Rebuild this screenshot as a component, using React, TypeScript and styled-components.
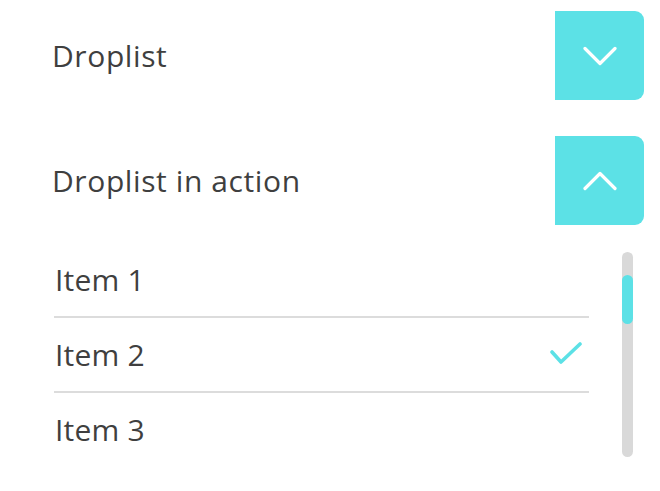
import React from "react";
import styled, { createGlobalStyle } from "styled-components";

const GlobalStyle = createGlobalStyle`
  html, body {
    margin: 0;
    padding: 0;
    background: #ffffff;
  }
  body {
    font-family: "Open Sans", "Liberation Sans", sans-serif;
    color: #3f3f3f;
  }
`;

const ACCENT = "#5ce1e6";

const Page = styled.div`
  width: 660px;
  height: 491px;
  box-sizing: border-box;
  padding: 11px 16px 0 52px;
  display: flex;
  flex-direction: column;
`;

const Header = styled.div<{ $gap?: number }>`
  display: flex;
  align-items: center;
  justify-content: space-between;
  height: 89px;
  margin-bottom: ${(p) => p.$gap ?? 0}px;
`;

const Title = styled.span`
  font-size: 30px;
  font-weight: 400;
  letter-spacing: 0.6px;
  line-height: normal;
`;

const ToggleButton = styled.button`
  width: 89px;
  height: 89px;
  border: none;
  padding: 0;
  background: ${ACCENT};
  border-radius: 0 9px 9px 0;
  display: flex;
  align-items: center;
  justify-content: center;
  cursor: pointer;
`;

const ListArea = styled.div`
  display: flex;
  align-items: flex-start;
  gap: 33px;
  margin-top: 18px;
  padding-left: 2px;
`;

const Items = styled.ul`
  list-style: none;
  margin: 0;
  padding: 0;
  width: 535px;
`;

const Item = styled.li<{ $last?: boolean }>`
  height: 73px;
  display: flex;
  align-items: center;
  justify-content: space-between;
  padding: 0 4px 0 1px;
  border-bottom: ${(p) => (p.$last ? "none" : "2px solid #dcdcdc")};
  font-size: 30px;
  letter-spacing: 0.2px;
  line-height: normal;
`;

const Track = styled.div`
  margin-top: 9px;
  width: 11px;
  height: 205px;
  border-radius: 6px;
  background: #d9d9d9;
  display: flex;
  flex-direction: column;
`;

const Thumb = styled.div`
  margin-top: 23px;
  width: 11px;
  height: 49px;
  border-radius: 6px;
  background: ${ACCENT};
`;

const Chevron = ({ up }: { up?: boolean }) => (
  <svg width="34" height="20" viewBox="0 0 34 20" fill="none">
    <polyline
      points={up ? "2,17.5 17,2.5 32,17.5" : "2,2.5 17,17.5 32,2.5"}
      stroke="#ffffff"
      strokeWidth="3.2"
      strokeLinecap="round"
      strokeLinejoin="round"
    />
  </svg>
);

const Check = () => (
  <svg width="36" height="26" viewBox="0 0 36 26" fill="none">
    <polyline
      points="3,10 12,20 31,2"
      stroke={ACCENT}
      strokeWidth="3.6"
      strokeLinecap="round"
      strokeLinejoin="round"
    />
  </svg>
);

const items = [
  { label: "Item 1", selected: false },
  { label: "Item 2", selected: true },
  { label: "Item 3", selected: false },
];

export default function App() {
  return (
    <>
      <GlobalStyle />
      <Page>
        <Header $gap={36}>
          <Title>Droplist</Title>
          <ToggleButton aria-label="Open">
            <Chevron />
          </ToggleButton>
        </Header>
        <Header>
          <Title>Droplist in action</Title>
          <ToggleButton aria-label="Close">
            <Chevron up />
          </ToggleButton>
        </Header>
        <ListArea>
          <Items>
            {items.map((it, i) => (
              <Item key={it.label} $last={i === items.length - 1}>
                <span>{it.label}</span>
                {it.selected && <Check />}
              </Item>
            ))}
          </Items>
          <Track>
            <Thumb />
          </Track>
        </ListArea>
      </Page>
    </>
  );
}
